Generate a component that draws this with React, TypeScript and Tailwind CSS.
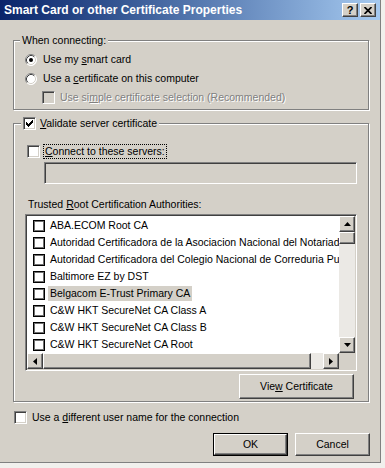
import React from "react";

const U = ({ children }: { children: React.ReactNode }) => (
  <span className="underline underline-offset-[1px] decoration-[1px]">{children}</span>
);

function Check({ checked = false, disabled = false }: { checked?: boolean; disabled?: boolean }) {
  return (
    <span
      className={`inline-flex w-[13px] h-[13px] shrink-0 items-center justify-center border border-t-[#808080] border-l-[#808080] border-r-white border-b-white shadow-[inset_1px_1px_0_#404040,inset_-1px_-1px_0_#d4d0c8] ${
        disabled ? "bg-[#d4d0c8]" : "bg-white"
      }`}
    >
      {checked && (
        <svg width="7" height="7" viewBox="0 0 7 7" shapeRendering="crispEdges">
          <path
            d="M6 0h1v3h-1v1h-1v1h-1v1h-1v1h-1v-1h-1v-1h-1v-3h1v1h1v1h1v-1h1v-1h1z"
            fill="#000"
          />
        </svg>
      )}
    </span>
  );
}

function Radio({ checked = false }: { checked?: boolean }) {
  return (
    <svg width="12" height="12" viewBox="0 0 12 12" className="shrink-0">
      <circle cx="6" cy="6" r="5.5" fill="#fff" />
      <path d="M2.11 9.89 A5.5 5.5 0 0 1 9.89 2.11" stroke="#808080" fill="none" />
      <path d="M9.89 2.11 A5.5 5.5 0 0 1 2.11 9.89" stroke="#ffffff" fill="none" />
      <path d="M2.82 9.18 A4.5 4.5 0 0 1 9.18 2.82" stroke="#404040" fill="none" />
      <path d="M9.18 2.82 A4.5 4.5 0 0 1 2.82 9.18" stroke="#d4d0c8" fill="none" />
      {checked && <circle cx="6" cy="6" r="2" fill="#000" />}
    </svg>
  );
}

function ListCheck() {
  return (
    <span className="inline-block w-[12px] h-[12px] shrink-0 border border-black bg-white shadow-[inset_1px_1px_0_#707070,inset_-1px_-1px_0_#707070]" />
  );
}

const raised =
  "border border-t-white border-l-white border-r-[#404040] border-b-[#404040] shadow-[inset_-1px_-1px_0_#808080] bg-[#d4d0c8]";

function Arrow({ dir }: { dir: "up" | "down" | "left" | "right" }) {
  const d =
    dir === "up"
      ? "M3.5 0 L7 4 L0 4 Z"
      : dir === "down"
      ? "M0 0 L7 0 L3.5 4 Z"
      : dir === "left"
      ? "M0 3.5 L4 0 L4 7 Z"
      : "M0 0 L4 3.5 L0 7 Z";
  const w = dir === "up" || dir === "down" ? 7 : 4;
  const h = dir === "up" || dir === "down" ? 4 : 7;
  return (
    <svg width={w} height={h} viewBox={`0 0 ${w} ${h}`}>
      <path d={d} fill="#000" />
    </svg>
  );
}

const items = [
  "ABA.ECOM Root CA",
  "Autoridad Certificadora de la Asociacion Nacional del Notariado Mexicano",
  "Autoridad Certificadora del Colegio Nacional de Correduria Publica Mexicana",
  "Baltimore EZ by DST",
  "Belgacom E-Trust Primary CA",
  "C&W HKT SecureNet CA Class A",
  "C&W HKT SecureNet CA Class B",
  "C&W HKT SecureNet CA Root",
];

export default function App() {
  return (
    <div className="w-[385px] h-[468px] bg-[#f1f0ed] font-['Liberation_Sans',Arial,sans-serif] text-[10.5px] leading-[13px] text-black">
      <div className="w-[381px] h-[463px] bg-[#d4d0c8] border-r border-b border-[#808080] flex flex-col">
        {/* Title bar */}
        <div className="h-[20px] shrink-0 flex items-center pl-[4px] pr-[4px] bg-gradient-to-r from-[#0a246a] to-[#a6caf0]">
          <span className="text-white font-bold text-[12px] leading-[14px]">
            Smart Card or other Certificate Properties
          </span>
          <div className="ml-auto flex gap-[2px]">
            <div className={`w-[16px] h-[14px] flex items-center justify-center ${raised}`}>
              <span className="font-bold text-[11px] leading-[11px]">?</span>
            </div>
            <div className={`w-[16px] h-[14px] flex items-center justify-center ${raised}`}>
              <svg width="8" height="7" viewBox="0 0 8 7">
                <path d="M0.5 0 L7.5 7 M7.5 0 L0.5 7" stroke="#000" strokeWidth="1.7" />
              </svg>
            </div>
          </div>
        </div>

        <div className="flex flex-col pl-[13px]">
          {/* When connecting */}
          <fieldset className="mt-[14px] w-[356px] border border-[#808080] shadow-[inset_1px_1px_0_#fff,1px_1px_0_#fff] p-0 m-0">
            <legend className="ml-[6px] px-[2px] leading-[13px] bg-[#d4d0c8]">When connecting:</legend>
            <div className="flex flex-col pl-[11px] pt-[3px] pb-[2px]">
              <div className="h-[19px] flex items-center gap-[6px]">
                <Radio checked />
                <span>
                  Use my <U>s</U>mart card
                </span>
              </div>
              <div className="h-[19px] flex items-center gap-[6px]">
                <Radio />
                <span>
                  Use a <U>c</U>ertificate on this computer
                </span>
              </div>
              <div className="h-[19px] flex items-center gap-[5px] pl-[17px]">
                <Check disabled />
                <span className="text-[#808080] [text-shadow:1px_1px_0_#fff]">
                  Use si<U>m</U>ple certificate selection (Recommended)
                </span>
              </div>
            </div>
          </fieldset>

          {/* Validate server certificate */}
          <fieldset className="mt-[6px] w-[356px] border border-[#808080] shadow-[inset_1px_1px_0_#fff,1px_1px_0_#fff] p-0 m-0">
            <legend className="ml-[7px] px-[2px] bg-[#d4d0c8]">
              <span className="flex items-center gap-[4px] h-[15px]">
                <Check checked />
                <span>
                  <U>V</U>alidate server certificate
                </span>
              </span>
            </legend>
            <div className="flex flex-col pl-[13px] pt-[12px] pb-[2px]">
              <div className="h-[16px] flex items-center">
                <Check />
                <span className="ml-[3px] h-[15px] px-[1px] border border-dotted border-black leading-[13px]">
                  <U>C</U>onnect to these servers:
                </span>
              </div>
              <div className="mt-[3px] ml-[17px] w-[313px] h-[22px] bg-[#d4d0c8] border border-t-[#808080] border-l-[#808080] border-r-white border-b-white shadow-[inset_1px_1px_0_#404040,inset_-1px_-1px_0_#d4d0c8]" />
              <div className="mt-[14px] ml-[1px] h-[13px]">
                Trusted <U>R</U>oot Certification Authorities:
              </div>
              {/* List */}
              <div className="mt-[3px] ml-[-2px] w-[332px] h-[157px] bg-white border border-t-[#808080] border-l-[#808080] border-r-white border-b-white shadow-[inset_1px_1px_0_#404040,inset_-1px_-1px_0_#d4d0c8] p-[1px] flex flex-col">
                <div className="flex flex-1 min-h-0">
                  <div className="flex-1 min-w-0 overflow-hidden flex flex-col pl-[6px] pt-[1px]">
                    {items.map((t, i) => (
                      <div key={i} className="h-[17px] shrink-0 flex items-center whitespace-nowrap">
                        <ListCheck />
                        <span
                          className={`ml-[3px] px-[2px] h-[15px] leading-[15px] ${
                            i === 4 ? "bg-[#d4d0c8]" : ""
                          }`}
                        >
                          {t}
                        </span>
                      </div>
                    ))}
                  </div>
                  <div className="w-[16px] flex flex-col bg-[#ebe9e5]">
                    <div className={`h-[16px] flex items-center justify-center ${raised}`}>
                      <Arrow dir="up" />
                    </div>
                    <div className={`h-[12px] ${raised}`} />
                    <div className="flex-1" />
                    <div className={`h-[16px] flex items-center justify-center ${raised}`}>
                      <Arrow dir="down" />
                    </div>
                  </div>
                </div>
                <div className="h-[16px] flex shrink-0">
                  <div className="flex-1 flex bg-[#ebe9e5]">
                    <div className={`w-[16px] flex items-center justify-center ${raised}`}>
                      <Arrow dir="left" />
                    </div>
                    <div className={`w-[268px] ${raised}`} />
                    <div className="flex-1" />
                    <div className={`w-[16px] flex items-center justify-center ${raised}`}>
                      <Arrow dir="right" />
                    </div>
                  </div>
                  <div className="w-[16px] bg-[#d4d0c8]" />
                </div>
              </div>
              <div
                className={`mt-[3px] ml-[212px] w-[115px] h-[25px] flex items-center justify-center ${raised}`}
              >
                <span>
                  Vie<U>w</U> Certificate
                </span>
              </div>
            </div>
          </fieldset>

          {/* Different user name */}
          <div className="mt-[9px] ml-[1px] h-[13px] flex items-center gap-[5px]">
            <Check />
            <span>
              Use a <U>d</U>ifferent user name for the connection
            </span>
          </div>

          {/* Buttons */}
          <div className="mt-[9px] ml-[200px] flex gap-[7px]">
            <div className="w-[75px] h-[23px] border border-black">
              <div className={`w-full h-full flex items-center justify-center ${raised}`}>OK</div>
            </div>
            <div className={`w-[75px] h-[23px] flex items-center justify-center ${raised}`}>Cancel</div>
          </div>
        </div>
      </div>
    </div>
  );
}
